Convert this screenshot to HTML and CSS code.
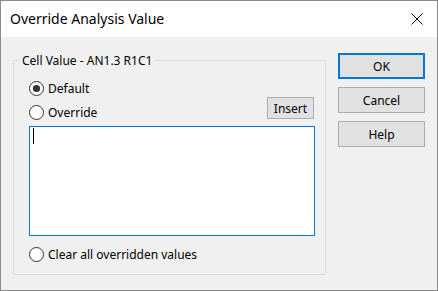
FILE: index.html
```html
<!DOCTYPE html>
<html>
<head>
<meta charset="utf-8">
<link rel="stylesheet" href="styles.css">
</head>
<body>
<div class="window">
  <div class="titlebar">
    <span class="title">Override Analysis Value</span>
    <svg class="close" width="12" height="12" viewBox="0 0 12 12"><path d="M0.5 0.5 L11.5 11.5 M11.5 0.5 L0.5 11.5" stroke="#000" stroke-width="1" fill="none"/></svg>
  </div>
  <div class="content">
    <fieldset class="group">
      <legend class="legend">Cell Value - AN1.3 R1C1</legend>
      <label class="radio">
        <svg class="radio-icon" width="15" height="15" viewBox="0 0 15 15"><circle cx="7.5" cy="7.5" r="7" fill="#fff" stroke="#333" stroke-width="1"/><circle cx="7.5" cy="7.5" r="3.6" fill="#333"/></svg>
        <span>Default</span>
      </label>
      <div class="override-row">
        <label class="radio">
          <svg class="radio-icon" width="15" height="15" viewBox="0 0 15 15"><circle cx="7.5" cy="7.5" r="7" fill="#fff" stroke="#333" stroke-width="1"/></svg>
          <span>Override</span>
        </label>
        <button class="btn small">Insert</button>
      </div>
      <div class="editor"><span class="caret"></span></div>
      <label class="radio clear">
        <svg class="radio-icon" width="15" height="15" viewBox="0 0 15 15"><circle cx="7.5" cy="7.5" r="7" fill="#fff" stroke="#333" stroke-width="1"/></svg>
        <span>Clear all overridden values</span>
      </label>
    </fieldset>
    <div class="buttons">
      <button class="btn default">OK</button>
      <button class="btn">Cancel</button>
      <button class="btn">Help</button>
    </div>
  </div>
</div>
</body>
</html>
```
FILE: styles.css
```css
html, body {
  margin: 0;
  padding: 0;
  background: #f0f0f0;
}
.window {
  width: 438px;
  height: 291px;
  box-sizing: border-box;
  border: 1px solid #8a8a8a;
  background: #f0f0f0;
  font-family: "Noto Sans", "DejaVu Sans", sans-serif;
  font-size: 12px;
  color: #000;
  display: flex;
  flex-direction: column;
}
.titlebar {
  height: 36px;
  background: #fff;
  display: flex;
  align-items: center;
  justify-content: space-between;
  padding: 0 14px 0 9px;
}
.title {
  font-size: 14px;
  line-height: 36px;
}
.close {
  display: block;
}
.content {
  display: flex;
  align-items: flex-start;
  padding: 16px 12px 0 12px;
  gap: 12px;
}
.group {
  width: 313px;
  box-sizing: border-box;
  margin: 0;
  border: 1px solid #dcdcdc;
  padding: 13px 10px 12px 15px;
  min-width: 0;
}
.legend {
  line-height: 15px;
  padding: 0 2px;
  margin-left: -9px;
}
.radio {
  display: flex;
  align-items: center;
  height: 15px;
  line-height: 15px;
}
.radio-icon {
  display: block;
  margin-right: 4px;
  flex: none;
}
.override-row {
  display: flex;
  justify-content: space-between;
  align-items: flex-end;
  height: 23px;
  margin-top: 1px;
}
.btn {
  font-family: inherit;
  font-size: 12px;
  color: #000;
  background: #e1e1e1;
  border: 1px solid #adadad;
  box-sizing: border-box;
  width: 87px;
  height: 26px;
  padding: 0;
  margin: 0;
}
.btn.small {
  width: 47px;
  height: 22px;
  margin-bottom: 1px;
  margin-right: 1px;
}
.btn.default {
  border: 2px solid #0078d7;
}
.buttons {
  display: flex;
  flex-direction: column;
  gap: 8px;
  width: 87px;
}
.editor {
  margin-top: 6px;
  height: 110px;
  box-sizing: border-box;
  border: 1px solid #0078d7;
  background: #fff;
  padding: 1px 0 0 3px;
}
.caret {
  display: block;
  width: 1px;
  height: 16px;
  background: #000;
}
.clear {
  margin-top: 11px;
}
```
